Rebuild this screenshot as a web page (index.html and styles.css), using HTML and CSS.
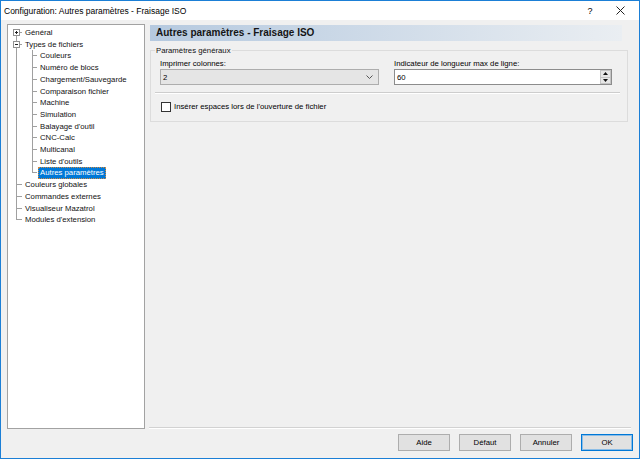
FILE: index.html
```html
<!DOCTYPE html>
<html lang="fr">
<head>
  <meta charset="UTF-8" />
  <title>Configuration: Autres paramètres - Fraisage ISO</title>
  <link rel="stylesheet" href="styles.css">
</head>
<body>
  <div class="window">
    <div class="titlebar">
      <span class="title">Configuration: Autres paramètres - Fraisage ISO</span>
      <span class="help">?</span>
      <span class="close">
        <svg width="9" height="9" viewBox="0 0 9 9"><path d="M0.5 0.5 L8.5 8.5 M8.5 0.5 L0.5 8.5" stroke="#222" stroke-width="1" fill="none"/></svg>
      </span>
    </div>

    <div class="main">
      <div class="tree">
        <ul>
          <li><span class="exp plus"></span><span class="label">Général</span></li>
          <li><span class="exp minus"></span><span class="label">Types de fichiers</span>
            <ul>
              <li><span class="label">Couleurs</span></li>
              <li><span class="label">Numéro de blocs</span></li>
              <li><span class="label">Chargement/Sauvegarde</span></li>
              <li><span class="label">Comparaison fichier</span></li>
              <li><span class="label">Machine</span></li>
              <li><span class="label">Simulation</span></li>
              <li><span class="label">Balayage d'outil</span></li>
              <li><span class="label">CNC-Calc</span></li>
              <li><span class="label">Multicanal</span></li>
              <li><span class="label">Liste d'outils</span></li>
              <li><span class="label selected">Autres paramètres</span></li>
            </ul>
          </li>
          <li><span class="label">Couleurs globales</span></li>
          <li><span class="label">Commandes externes</span></li>
          <li><span class="label">Visualiseur Mazatrol</span></li>
          <li><span class="label">Modules d'extension</span></li>
        </ul>
      </div>

      <div class="pane">
        <div class="header">Autres paramètres - Fraisage ISO</div>

        <fieldset class="group">
          <legend>Paramètres généraux</legend>
          <div class="group-body">
            <div class="fields">
              <div class="field">
                <div class="field-label">Imprimer colonnes:</div>
                <div class="select">
                  <span>2</span>
                  <svg width="7" height="4" viewBox="0 0 7 4"><path d="M0.5 0.5 L3.5 3.5 L6.5 0.5" stroke="#555" stroke-width="1" fill="none"/></svg>
                </div>
              </div>
              <div class="field">
                <div class="field-label">Indicateur de longueur max de ligne:</div>
                <div class="spin-input">
                  <span>60</span>
                  <div class="spinner">
                    <span class="spin-btn"><svg width="5" height="3" viewBox="0 0 5 3"><path d="M0 3 L2.5 0 L5 3 Z" fill="#111"/></svg></span>
                    <span class="spin-btn"><svg width="5" height="3" viewBox="0 0 5 3"><path d="M0 0 L2.5 3 L5 0 Z" fill="#111"/></svg></span>
                  </div>
                </div>
              </div>
            </div>
            <div class="divider"></div>
            <div class="check"><span class="box"></span>Insérer espaces lors de l'ouverture de fichier</div>
          </div>
        </fieldset>

        <div class="sep"></div>
      </div>
    </div>

    <div class="buttons">
      <button class="btn">Aide</button>
      <button class="btn">Défaut</button>
      <button class="btn">Annuler</button>
      <button class="btn ok">OK</button>
    </div>
  </div>
</body>
</html>
```

FILE: styles.css
```css
* {
  margin: 0;
  padding: 0;
  box-sizing: border-box;
}

body {
  width: 640px;
  height: 459px;
  overflow: hidden;
  background: #f0f0f0;
  font-family: "Liberation Sans", Arial, sans-serif;
  font-size: 7.75px;
  color: #000;
}

.window {
  height: 459px;
  border: 1px solid #1b7fd6;
  display: flex;
  flex-direction: column;
}

/* barre de titre */
.titlebar {
  height: 19px;
  background: #fff;
  display: flex;
  align-items: center;
  padding: 0 4px 0 3px;
  font-size: 8.5px;
  color: #000;
}

.title {
  flex: 1;
}

.help,
.close {
  width: 30px;
  text-align: center;
  display: flex;
  justify-content: center;
  align-items: center;
}

.help {
  font-size: 9px;
}

/* zone principale */
.main {
  height: 409px;
  display: flex;
  padding: 4px 8px 0 6px;
}

.tree {
  width: 138px;
  height: 405px;
  background: #fff;
  border: 1px solid #a2a2a2;
  padding-top: 2px;
}

.tree ul {
  list-style: none;
}

.tree li {
  position: relative;
  line-height: 11.7px;
  color: #111;
}

.tree li::before,
.tree li::after {
  content: "";
  position: absolute;
}

/* niveau 0 */
.tree > ul > li {
  padding-left: 15px;
}

.tree > ul > li::before {
  left: 8px;
  top: 0;
  bottom: 0;
  border-left: 1px solid #a0a0a0;
}

.tree > ul > li:first-child::before {
  top: 5px;
}

.tree > ul > li:last-child::before,
.tree ul ul > li:last-child::before {
  bottom: auto;
  height: 6px;
}

.tree > ul > li::after {
  left: 8px;
  top: 5px;
  width: 6px;
  border-top: 1px solid #a0a0a0;
}

/* niveau 1 */
.tree ul ul > li {
  padding-left: 15px;
}

.tree ul ul > li::before {
  left: 9px;
  top: 0;
  bottom: 0;
  border-left: 1px solid #a0a0a0;
}

.tree ul ul > li::after {
  left: 9px;
  top: 5px;
  width: 5px;
  border-top: 1px solid #a0a0a0;
}

.exp {
  position: absolute;
  left: 5px;
  top: 2px;
  width: 7px;
  height: 7px;
  border: 1px solid #919191;
  background: #fff;
  z-index: 1;
}

.exp::before,
.exp::after {
  content: "";
  position: absolute;
  background: #222;
}

.exp::before {
  left: 1px;
  top: 2px;
  width: 3px;
  height: 1px;
}

.exp.plus::after {
  left: 2px;
  top: 1px;
  width: 1px;
  height: 3px;
}

.label {
  display: inline-block;
  padding: 0 2px;
  height: 11.7px;
  white-space: nowrap;
}

.label.selected {
  background: #0078d7;
  color: #fff;
  outline: 1px dotted #d08a40;
  outline-offset: -1px;
}

/* panneau de droite */
.pane {
  flex: 1;
  margin-left: 4px;
  display: flex;
  flex-direction: column;
}

.header {
  margin: 1px 9px 0 1px;
  height: 16px;
  line-height: 16px;
  padding-left: 6px;
  background: linear-gradient(to right, #b5c9df, #eaeef2);
  font-size: 10px;
  font-weight: bold;
  color: #151515;
}

.group {
  margin: 4px 3px 0 1px;
  border: 1px solid #dcdcdc;
  min-width: 0;
}

.group legend {
  margin-left: 4px;
  padding: 0 1px;
  line-height: 11px;
  color: #111;
}

.group-body {
  padding: 3px 14px 9px 9px;
}

.fields {
  display: grid;
  grid-template-columns: 219px 218px;
  column-gap: 15px;
}

.field-label {
  line-height: 10px;
}

.select {
  height: 16px;
  background: #e5e5e5;
  border: 1px solid #adadad;
  display: flex;
  align-items: center;
  justify-content: space-between;
  padding: 0 5px 0 2px;
}

.spin-input {
  height: 16px;
  background: #fff;
  border: 1px solid #8c8c8c;
  display: flex;
  align-items: center;
  justify-content: space-between;
  padding-left: 2px;
}

.spinner {
  width: 11px;
  height: 14px;
  display: flex;
  flex-direction: column;
}

.spin-btn {
  flex: 1;
  display: flex;
  align-items: center;
  justify-content: center;
  background: #e6e6e6;
  border: 1px solid #c4c4c4;
}

.spin-btn + .spin-btn {
  border-top: none;
}

.divider {
  margin: 7px -7px 0 -5px;
  height: 2px;
  border-top: 1px solid #cdcdcd;
  border-bottom: 1px solid #fff;
}

.check {
  margin: 8px 0 0 1px;
  line-height: 10px;
  display: flex;
  align-items: center;
}

.check .box {
  width: 10px;
  height: 10px;
  border: 1px solid #333;
  background: #fff;
  margin-right: 3px;
}

.sep {
  margin-top: auto;
  height: 2px;
  border-top: 1px solid #d2d2d2;
  border-bottom: 1px solid #fff;
}

/* boutons */
.buttons {
  display: flex;
  justify-content: flex-end;
  gap: 9px;
  padding: 5px 6px 7px 0;
}

.btn {
  width: 52px;
  height: 17px;
  background: #e1e1e1;
  border: 1px solid #adadad;
  font-family: inherit;
  font-size: 7.75px;
  color: #000;
}

.btn.ok {
  border-color: #0078d7;
  box-shadow: inset 0 0 0 1px #8cbde6;
}
```
